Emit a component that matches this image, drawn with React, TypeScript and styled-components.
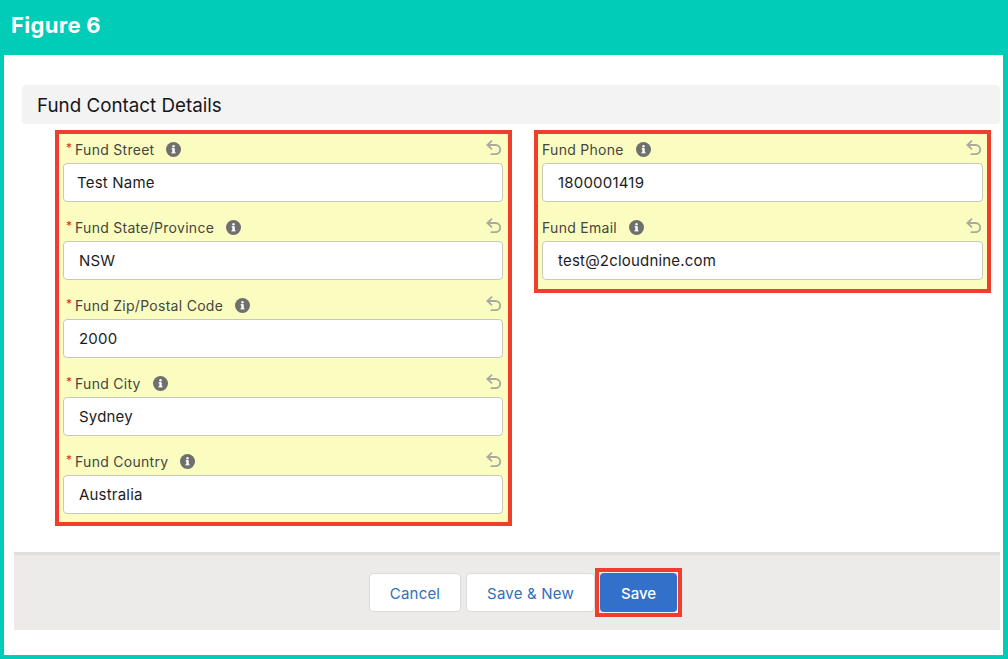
import React from "react";
import styled, { createGlobalStyle } from "styled-components";

const Global = createGlobalStyle`
  html, body { margin: 0; padding: 0; background: #00ccb8; }
  * { box-sizing: border-box; }
  body { font-family: Inter, "Liberation Sans", sans-serif; }
`;

const Page = styled.div`
  width: 1008px;
  height: 659px;
  overflow: hidden;
  background: #00ccb8;
  display: flex;
  flex-direction: column;
`;

const TitleBar = styled.header`
  height: 55px;
  flex: none;
  padding: 12px 0 0 11px;
  color: #fff;
  font-size: 22px;
  line-height: 26px;
  font-weight: 700;
  font-family: Inter, "Liberation Sans", sans-serif;
  letter-spacing: 0.3px;
`;

const Sheet = styled.main`
  width: 999px;
  height: 600px;
  margin-left: 4px;
  background: #fff;
  display: flex;
  flex-direction: column;
  padding-top: 30px;
`;

const SectionHeader = styled.h2`
  margin: 0 3px 0 18px;
  height: 39px;
  flex: none;
  background: #f3f3f3;
  border-radius: 4px;
  padding: 1px 15px 0;
  display: flex;
  align-items: center;
  font-size: 18.8px;
  font-weight: 400;
  color: #16161a;
`;

const Columns = styled.div`
  display: flex;
  align-items: flex-start;
  gap: 22px;
  margin: 6px 0 0 51px;
  height: 396px;
  flex: none;
`;

const Highlight = styled.section<{ $side: "left" | "right" }>`
  width: 457px;
  border: 4px solid #ef3f2c;
  background: #fbfdc0;
  padding: 0 ${(p) => (p.$side === "left" ? "5px" : "4px")}
    ${(p) => (p.$side === "left" ? "8px" : "9px")} 4px;
  display: flex;
  flex-direction: column;
`;

const Field = styled.div`
  height: 78px;
  padding-top: 3px;
  &:last-child { height: 68px; }
`;

const LabelRow = styled.div`
  height: 26px;
  padding-bottom: 1px;
  display: flex;
  align-items: center;
  font-size: 14px;
  letter-spacing: 0.28px;
  color: #45453f;
`;

const Required = styled.span`
  color: #e0262a;
  font-size: 12px;
  width: 12px;
  padding-left: 3px;
  line-height: 12px;
  margin-top: -3px;
`;

const InfoIcon = styled.svg`
  width: 15px;
  height: 15px;
  margin-left: 12px;
  flex: none;
`;

const UndoIcon = styled.svg`
  width: 16px;
  height: 16px;
  flex: none;
  margin-left: auto;
  margin-right: 1px;
  margin-top: -3px;
  fill: none;
  stroke: #a9a99f;
  stroke-width: 1.8;
  stroke-linecap: round;
  stroke-linejoin: round;
`;

const ValueBox = styled.div<{ $inset: number }>`
  height: 39px;
  background: #fff;
  border: 1px solid #c9c9bb;
  border-radius: 4px;
  padding: 0 ${(p) => p.$inset}px;
  display: flex;
  align-items: center;
  font-size: 15px;
  letter-spacing: 0.2px;
  color: #1c1c1e;
`;

const Footer = styled.footer`
  margin: 26px 3px 0 10px;
  height: 78px;
  flex: none;
  background: #ecebea;
  border-top: 3px solid #dfdedd;
  display: flex;
  align-items: flex-start;
  padding: 13px 0 0 355px;
`;

const Button = styled.button<{ $wide?: boolean }>`
  width: ${(p) => (p.$wide ? "129px" : "92px")};
  height: 39px;
  margin: 5px ${(p) => (p.$wide ? "0" : "5px")} 0 0;
  background: #fff;
  border: 1px solid #dddbda;
  border-radius: 4px;
  color: #2f6fb9;
  font: 400 15px Inter, "Liberation Sans", sans-serif;
  letter-spacing: 0.2px;
  padding: 2px 0 0;
`;

const SaveFrame = styled.div`
  border: 4px solid #ef3f2c;
  padding: 1px;
  background: #eef0f4;
`;

const PrimaryButton = styled.button`
  display: block;
  width: 77px;
  height: 39px;
  background: #3370c9;
  border: 0;
  border-radius: 4px;
  color: #fff;
  font: 500 15px Inter, "Liberation Sans", sans-serif;
  padding: 2px 0 0;
`;

const Info = () => (
  <InfoIcon viewBox="0 0 15 15" aria-hidden="true">
    <circle cx="7.5" cy="7.5" r="7.5" fill="#6f6f6d" />
    <rect x="6.3" y="6.4" width="2.5" height="4.6" fill="#fff" />
    <rect x="5.5" y="10.2" width="4" height="1.2" fill="#fff" />
    <rect x="5.6" y="6.2" width="2.5" height="1.1" fill="#fff" />
    <circle cx="7.5" cy="4.3" r="1.2" fill="#fff" />
  </InfoIcon>
);

const Undo = () => (
  <UndoIcon viewBox="0 0 16 16" aria-hidden="true">
    <path d="M5.5 1.2 1.5 5l4 3.8" />
    <path d="M1.5 5H9.6a4.6 4.6 0 0 1 0 9.2H5.4" />
  </UndoIcon>
);

type F = { label: string; value: string; required?: boolean; inset?: number };

const FieldRow = ({ label, value, required, inset = 15 }: F) => (
  <Field>
    <LabelRow>
      {required && <Required>*</Required>}
      {label}
      <Info />
      <Undo />
    </LabelRow>
    <ValueBox $inset={inset}>{value}</ValueBox>
  </Field>
);

const leftFields: F[] = [
  { label: "Fund Street", value: "Test Name", required: true, inset: 13 },
  { label: "Fund State/Province", value: "NSW", required: true },
  { label: "Fund Zip/Postal Code", value: "2000", required: true },
  { label: "Fund City", value: "Sydney", required: true },
  { label: "Fund Country", value: "Australia", required: true },
];

const rightFields: F[] = [
  { label: "Fund Phone", value: "1800001419" },
  { label: "Fund Email", value: "test@2cloudnine.com" },
];

export default function App() {
  return (
    <Page>
      <Global />
      <TitleBar>Figure 6</TitleBar>
      <Sheet>
        <SectionHeader>Fund Contact Details</SectionHeader>
        <Columns>
          <Highlight $side="left">
            {leftFields.map((f) => (
              <FieldRow key={f.label} {...f} />
            ))}
          </Highlight>
          <Highlight $side="right">
            {rightFields.map((f) => (
              <FieldRow key={f.label} {...f} />
            ))}
          </Highlight>
        </Columns>
        <Footer>
          <Button>Cancel</Button>
          <Button $wide>Save &amp; New</Button>
          <SaveFrame>
            <PrimaryButton>Save</PrimaryButton>
          </SaveFrame>
        </Footer>
      </Sheet>
    </Page>
  );
}
